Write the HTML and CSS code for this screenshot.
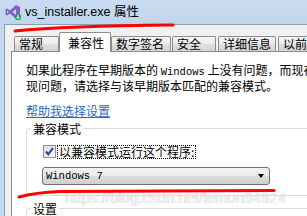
FILE: index.html
```html
<!DOCTYPE html>
<html>
<head>
<meta charset="utf-8">
<link rel="stylesheet" href="styles.css">
</head>
<body>
<div class="window">
  <div class="titlebar">
    <svg class="app-icon" width="16" height="16" viewBox="0 0 16 16">
      <path d="M11 1 L15 3 L15 13 L11 15 L5 9.5 L2 11.5 L0.5 10.5 L0.5 5.5 L2 4.5 L5 6.5 Z M11 5 L7.5 8 L11 11 Z M2 6.5 L2 9.5 L3.8 8 Z" fill="#865fc5" fill-rule="evenodd"/>
      <circle cx="13" cy="13" r="3.2" fill="#1e9e6a"/>
      <path d="M13 11 L13 14.4 M11.6 13.2 L13 14.6 L14.4 13.2" stroke="#fff" stroke-width="1" fill="none"/>
    </svg>
    <span class="title">vs_installer.exe 属性</span>
  </div>
  <div class="frame">
    <div class="client">
      <div class="tabs">
        <div class="tab tab-general">常规</div>
        <div class="tab tab-active">兼容性</div>
        <div class="tab tab-sign">数字签名</div>
        <div class="tab tab-security">安全</div>
        <div class="tab tab-details">详细信息</div>
        <div class="tab tab-previous">以前的版本</div>
      </div>
      <div class="panel">
        <p class="intro">如果此程序在早期版本的 <span class="mono">Windows</span> 上没有问题，而现在出<br>现问题，请选择与该早期版本匹配的兼容模式。</p>
        <a class="link">帮助我选择设置</a>
        <fieldset class="group">
          <legend class="group-title">兼容模式</legend>
          <div class="group-body">
            <div class="check-row">
              <span class="checkbox">
                <svg width="11" height="11" viewBox="0 0 11 11"><path d="M2 5.5 L4.3 8.3 L9 2" stroke="#1c3d9c" stroke-width="2" fill="none"/></svg>
              </span>
              <span class="check-label">以兼容模式运行这个程序:</span>
            </div>
            <div class="select">
              <span class="mono">Windows 7</span>
              <span class="arrow"></span>
            </div>
          </div>
        </fieldset>
        <fieldset class="group group-settings">
          <legend class="group-title">设置</legend>
          <div class="group-body"></div>
        </fieldset>
      </div>
    </div>
  </div>
</div>
<div class="watermark">https://blog.csdn.net/lemon94924</div>
<svg class="marks" width="307" height="216" viewBox="0 0 307 216">
  <path d="M15 31 Q 40 28.5 80 27 T 173 25" stroke="#ff0000" stroke-width="3" fill="none" stroke-linecap="round"/>
  <path d="M19 197 Q 35 192.5 60 191.5 L 274 190.5" stroke="#ff0000" stroke-width="3" fill="none" stroke-linecap="round"/>
</svg>
</body>
</html>
```

FILE: styles.css
```css
html, body {
  margin: 0;
  padding: 0;
}

body {
  width: 307px;
  height: 216px;
  overflow: hidden;
  position: relative;
  background: #c4d8ee;
  font-family: "Noto Sans CJK SC", sans-serif;
  color: #000;
}

.window {
  width: 360px;
}

.titlebar {
  height: 24px;
  display: flex;
  align-items: center;
  padding-left: 5px;
  background: linear-gradient(#cadcf0, #bfd5ec);
}

.app-icon {
  display: block;
  flex: none;
}

.title {
  margin-left: 4px;
  font-family: "Liberation Sans", "Noto Sans CJK SC", sans-serif;
  font-size: 12.5px;
  line-height: 14px;
  white-space: nowrap;
}

.frame {
  display: flex;
  padding-left: 4px;
}

.client {
  flex: 1;
  background: #f0f0f0;
  border-top: 1px solid #8a9db3;
  border-left: 1px solid #8a9db3;
  padding: 7px 0 0 6px;
}

.tabs {
  display: flex;
  align-items: flex-end;
  height: 20px;
  margin-bottom: -1px;
  padding-left: 3px;
  position: relative;
  z-index: 1;
}

.tab {
  box-sizing: border-box;
  height: 15px;
  margin-bottom: 1px;
  border: 1px solid #898c95;
  border-bottom: none;
  border-radius: 2px 2px 0 0;
  background: linear-gradient(#f5f5f5, #ececec 45%, #dedede 55%, #d3d3d3);
  padding-left: 4px;
  font-size: 12px;
  line-height: 13px;
  white-space: nowrap;
  overflow: hidden;
  flex: none;
}

.tab-general { width: 45px; }
.tab-active {
  width: 52px;
  height: 20px;
  margin-bottom: 0;
  background: #fff;
  padding-left: 8px;
  padding-top: 3px;
}
.tab-sign { width: 60px; }
.tab-security { width: 44px; margin-left: 1px; }
.tab-details { width: 58px; margin-left: 2px; }
.tab-previous { width: 70px; margin-left: 2px; }

.panel {
  background: #fff;
  border: 1px solid #898c95;
  padding: 11px 0 0 14px;
  height: 200px;
}

.intro {
  margin: 0;
  font-size: 12px;
  line-height: 13px;
  white-space: nowrap;
}

.mono {
  font-family: "Liberation Mono", monospace;
  font-size: 10.5px;
}

.link {
  display: block;
  margin-top: 12px;
  font-size: 12px;
  line-height: 13px;
  color: #2b66c9;
  text-decoration: underline;
  width: max-content;
}

.group {
  margin: 5px 0 0 0;
  padding: 0;
  width: 320px;
  border: 1px solid #d5dfe5;
  border-radius: 3px;
  min-width: 0;
}

.group-title {
  margin-left: 4px;
  padding: 0 2px;
  font-size: 12px;
  line-height: 13px;
}

.group-body {
  padding: 10px 0 10px 16px;
}

.check-row {
  display: flex;
  align-items: center;
  height: 13px;
}

.checkbox {
  box-sizing: border-box;
  width: 13px;
  height: 13px;
  border: 1px solid #8e8f8f;
  background: linear-gradient(135deg, #dcdcdc, #fbfbfb);
  display: flex;
  align-items: center;
  justify-content: center;
  flex: none;
}

.checkbox svg {
  display: block;
}

.check-label {
  margin-left: 1px;
  padding: 0 1px;
  border: 1px dotted #000;
  font-size: 12px;
  line-height: 12px;
  white-space: nowrap;
}

.select {
  box-sizing: border-box;
  margin: 9px 0 0 -1px;
  width: 228px;
  height: 18px;
  border: 1px solid #707070;
  border-radius: 3px;
  background: linear-gradient(#f2f2f2, #ebebeb 48%, #dddddd 52%, #cfcfcf);
  display: flex;
  align-items: center;
  justify-content: space-between;
  padding: 0 5px 0 3px;
}

.select .mono {
  line-height: 14px;
}

.arrow {
  width: 0;
  height: 0;
  border-left: 3.5px solid transparent;
  border-right: 3.5px solid transparent;
  border-top: 4px solid #000;
}

.group-settings {
  margin-top: 6px;
}

.watermark {
  position: absolute;
  left: 65px;
  top: 189px;
  font-family: "Liberation Sans", sans-serif;
  font-size: 15px;
  line-height: 18px;
  color: rgba(255, 255, 255, 0.85);
  text-shadow: 0 0 1px rgba(0, 0, 0, 0.35);
  white-space: nowrap;
}

.marks {
  position: absolute;
  left: 0;
  top: 0;
  pointer-events: none;
}
```
